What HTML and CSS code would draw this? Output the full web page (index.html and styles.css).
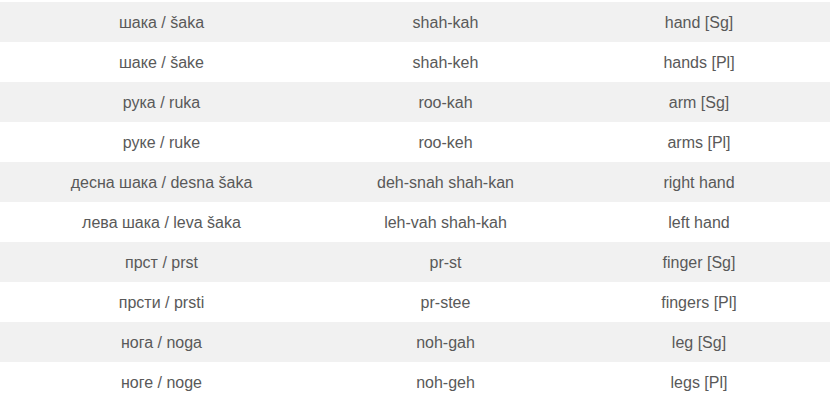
FILE: index.html
```html
<!DOCTYPE html>
<html>
<head>
<meta charset="utf-8">
<link rel="stylesheet" href="styles.css">
</head>
<body>
<table class="vocab">
<colgroup><col class="c1"><col class="c2"><col class="c3"></colgroup>
<tbody>
<tr><td>шака / šaka</td><td>shah-kah</td><td>hand [Sg]</td></tr>
<tr><td>шаке / šake</td><td>shah-keh</td><td>hands [Pl]</td></tr>
<tr><td>рука / ruka</td><td>roo-kah</td><td>arm [Sg]</td></tr>
<tr><td>руке / ruke</td><td>roo-keh</td><td>arms [Pl]</td></tr>
<tr><td>десна шака / desna šaka</td><td>deh-snah shah-kan</td><td>right hand</td></tr>
<tr><td>лева шака / leva šaka</td><td>leh-vah shah-kah</td><td>left hand</td></tr>
<tr><td>прст / prst</td><td>pr-st</td><td>finger [Sg]</td></tr>
<tr><td>прсти / prsti</td><td>pr-stee</td><td>fingers [Pl]</td></tr>
<tr><td>нога / noga</td><td>noh-gah</td><td>leg [Sg]</td></tr>
<tr><td>ноге / noge</td><td>noh-geh</td><td>legs [Pl]</td></tr>
</tbody>
</table>
</body>
</html>
```
FILE: styles.css
```css
html, body {
  margin: 0;
  padding: 0;
  background: #fff;
}
body {
  padding-top: 2px;
  font-family: "Liberation Sans", Arial, sans-serif;
  font-size: 16px;
  color: #595959;
  overflow: hidden;
}
.vocab {
  width: 830px;
  border-collapse: collapse;
  table-layout: fixed;
}
.c1 { width: 323px; }
.c2 { width: 245px; }
.c3 { width: 262px; }
.vocab tr {
  height: 40px;
}
.vocab td {
  padding: 1px 0 0;
  text-align: center;
  vertical-align: middle;
  line-height: 20px;
}
.vocab tr:nth-child(odd) {
  background: #f1f1f1;
}
```
